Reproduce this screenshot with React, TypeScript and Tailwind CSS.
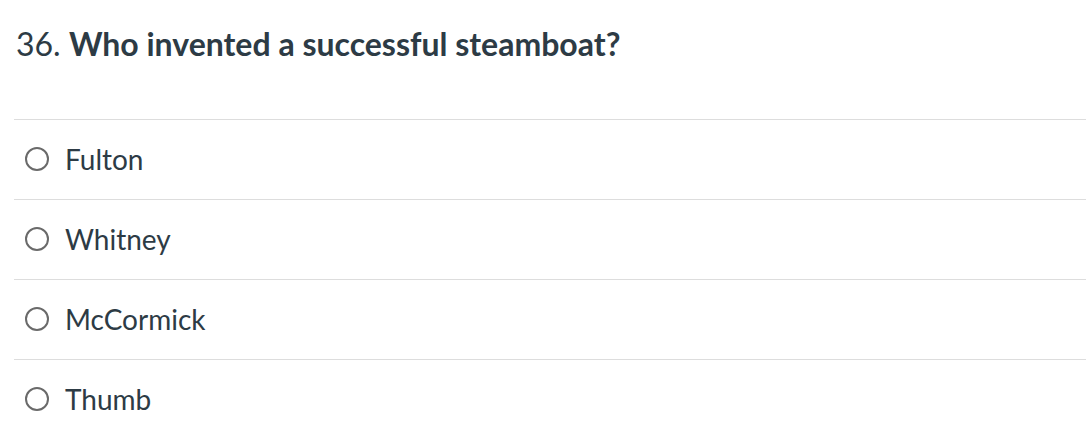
import React from "react"

const answers = ["Fulton", "Whitney", "McCormick", "Thumb"]

export default function App() {
  return (
    <div
      className="h-[436px] w-[1086px] overflow-hidden bg-white text-[#2d3b45]"
      style={{ fontFamily: "Lato, 'Noto Sans', sans-serif" }}
    >
      <h1 className="pl-4 pt-[24px] text-[32px] leading-[40px]">
        36. <span className="font-bold">Who invented a successful steamboat?</span>
      </h1>
      <div className="ml-[14px] mt-[55px] border-t border-[#dddddd]">
        {answers.map((a) => (
          <label
            key={a}
            className="flex h-[80px] items-center gap-[16px] border-b border-[#dddddd] pb-[2px] pl-[11px]"
          >
            <span className="block h-[24px] w-[24px] shrink-0 rounded-full border-2 border-[#6a6a6a]" />
            <span className="text-[28px]">{a}</span>
          </label>
        ))}
      </div>
    </div>
  )
}
